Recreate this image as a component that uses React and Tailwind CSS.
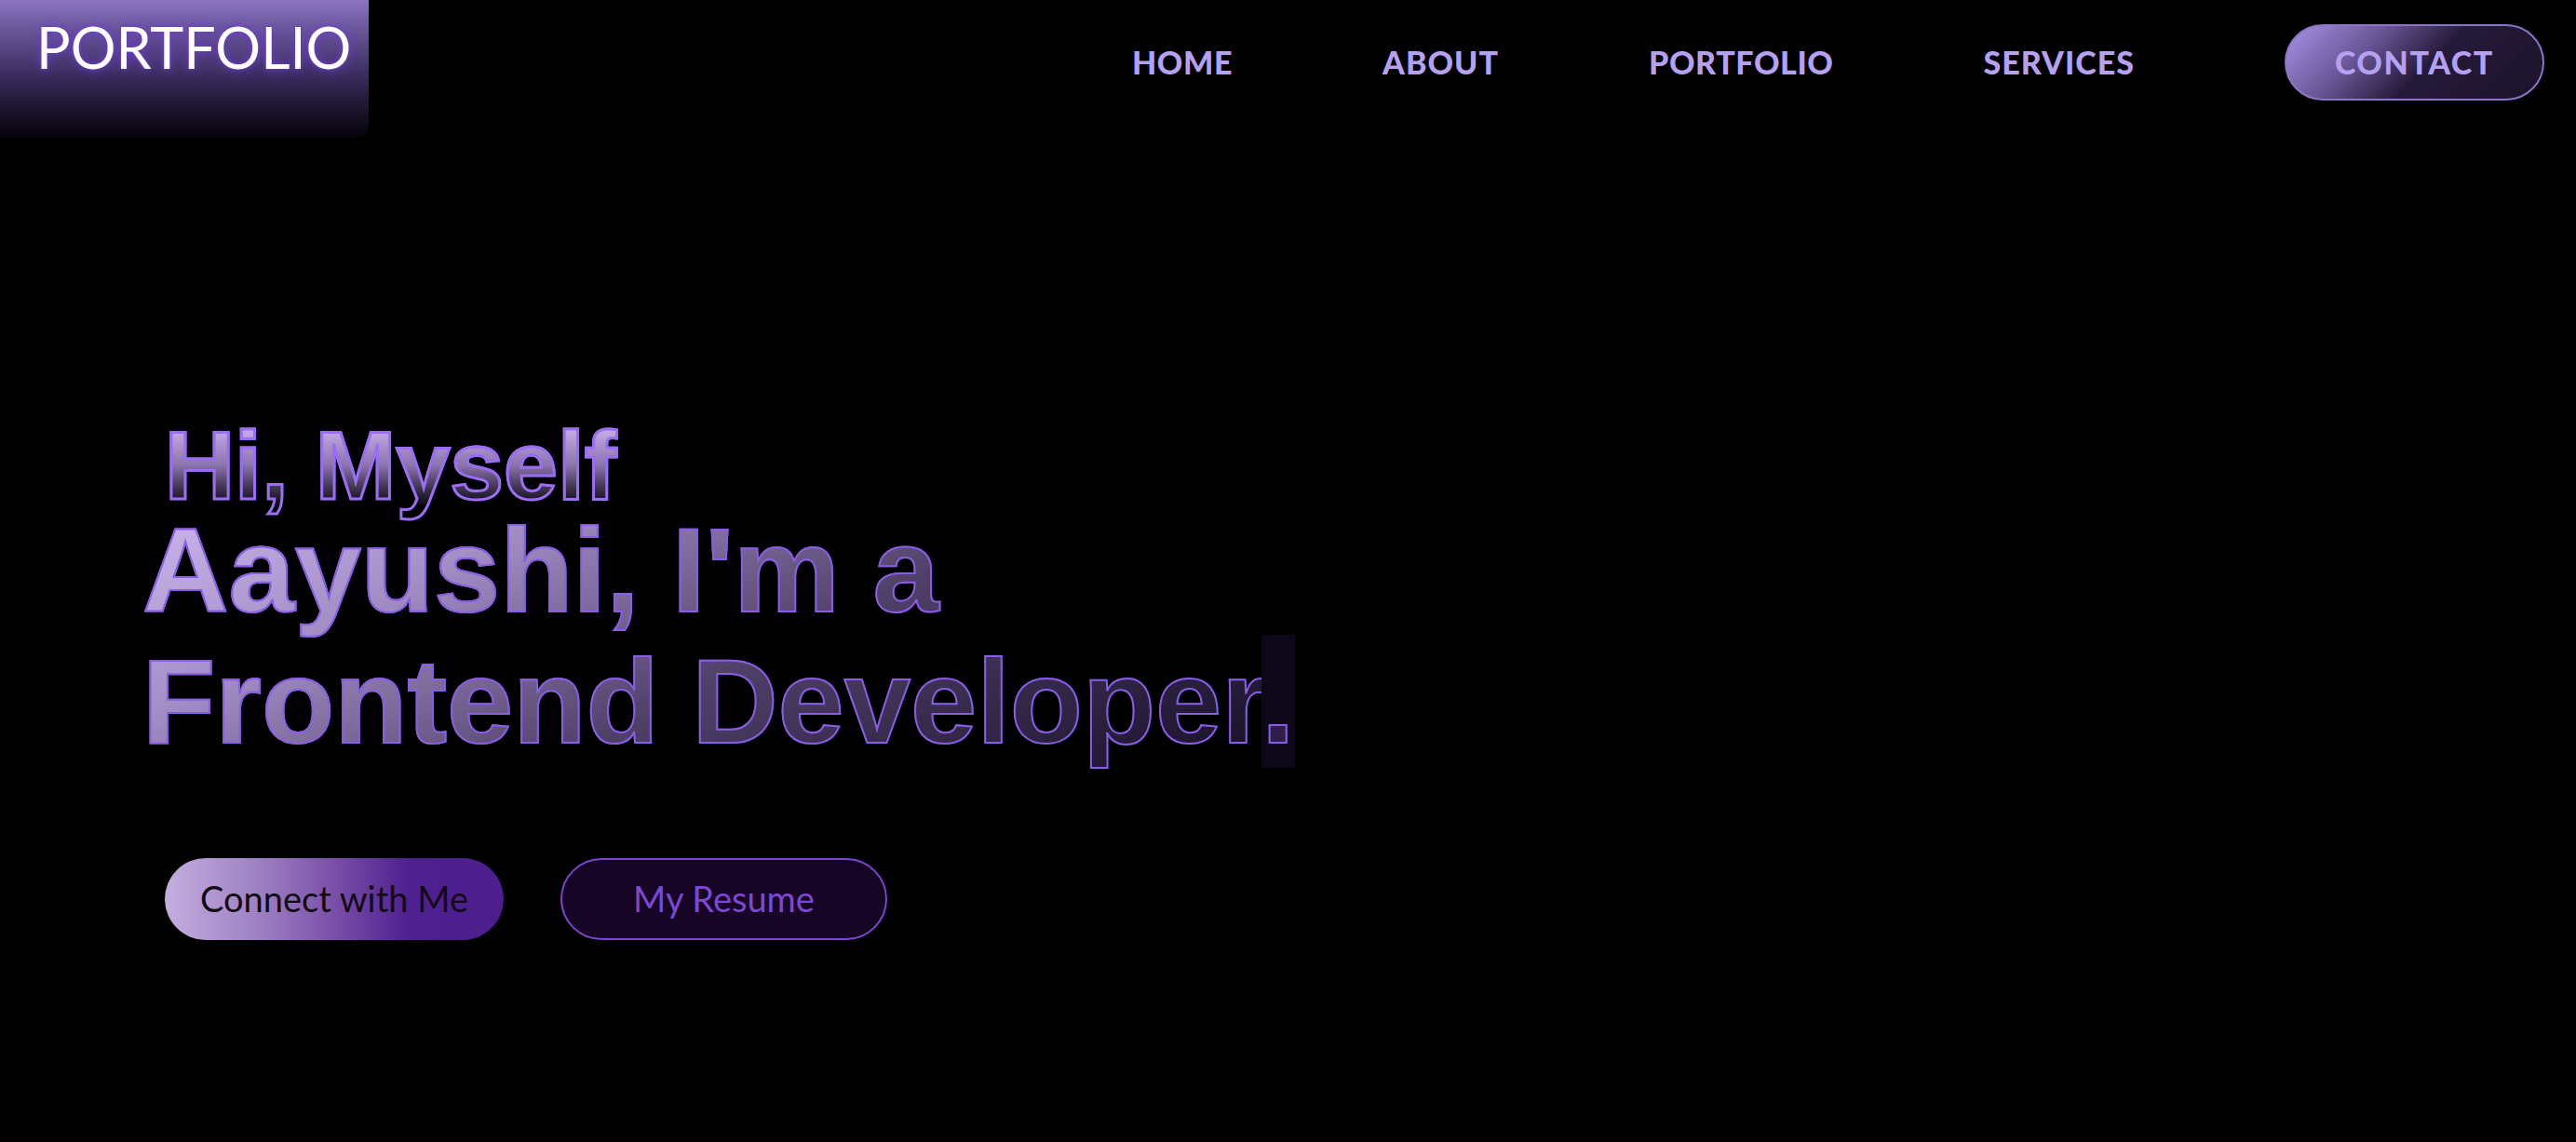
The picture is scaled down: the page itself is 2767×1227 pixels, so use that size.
import React from "react";

const gill = "[font-family:Lato,'Open_Sans',sans-serif]";

export default function App() {
  return (
    <div className="min-h-screen w-full bg-black overflow-hidden">
      <header className="flex justify-between items-start">
        <div className="w-[396px] h-[148px] rounded-br-[12px] bg-linear-to-b from-[#8b74c2] via-[#3a2c5e] via-55% to-[#06040a] pl-[39px] pt-[20px]">
          <div className={`${gill} text-white text-[61px] leading-none font-normal [text-shadow:0_0_12px_#6a3cc8,0_0_4px_#6a3cc8]`}>
            PORTFOLIO
          </div>
        </div>
        <nav className={`${gill} flex items-center gap-[161px] mt-[26px] mr-[34px] text-[#b5a0f2] text-[34px] font-black leading-none`}>
          <a className="tracking-[0.6px]">HOME</a>
          <a className="tracking-[1px]">ABOUT</a>
          <a className="tracking-[0.6px]">PORTFOLIO</a>
          <a className="tracking-[1px]">SERVICES</a>
          <a className="h-[82px] px-[52px] flex items-center rounded-full border-2 border-[#8c74c8] bg-[linear-gradient(135deg,#a893e8_0%,#6a5798_30%,#251a3a_55%,#1b1229_100%)] tracking-[1.6px]">
            CONTACT
          </a>
        </nav>
      </header>

      <section className="pl-[153px] mt-[310px] [font-family:'Liberation_Sans',Arial,sans-serif] font-bold">
        <div className="pl-[24px]">
          <span className="inline-block text-[104px] leading-[84px] bg-linear-to-b from-[#cdb1ee] via-[#8a74ac] to-[#100c16] bg-clip-text text-transparent [-webkit-text-stroke:3px_#9b6cf5]">
            Hi, Myself
          </span>
        </div>
        <div className="inline-block text-[128px] leading-[1.1] [background-image:linear-gradient(153deg,#cdb7ee_0%,#a38fc6_25%,#4f4068_55%,#231a36_88%,#140e20_100%)] bg-clip-text text-transparent [-webkit-text-stroke:2px_#8a5ce8]">
          Aayushi, I'm a
          <br />
          Frontend Developer
          <span className="[background-image:linear-gradient(#2e1f48,#2e1f48),linear-gradient(#0e0718,#0e0718)] [background-clip:text,border-box] [-webkit-background-clip:text,border-box]">
            .
          </span>
        </div>

        <div className={`${gill} flex items-center gap-[61px] ml-[24px] mt-[97px]`}>
          <button className="w-[364px] h-[88px] rounded-full flex items-center justify-center bg-[linear-gradient(90deg,#c4aee0_0%,#9a7cc0_30%,#7a4ea8_50%,#4e2090_72%,#4c1f8c_100%)] text-[#120818] text-[38px] font-normal">
            Connect with Me
          </button>
          <button className="w-[351px] h-[88px] rounded-full flex items-center justify-center bg-[#160524] border-2 border-[#7a45d0] text-[#7b48d2] text-[38px] font-normal">
            My Resume
          </button>
        </div>
      </section>
    </div>
  );
}
